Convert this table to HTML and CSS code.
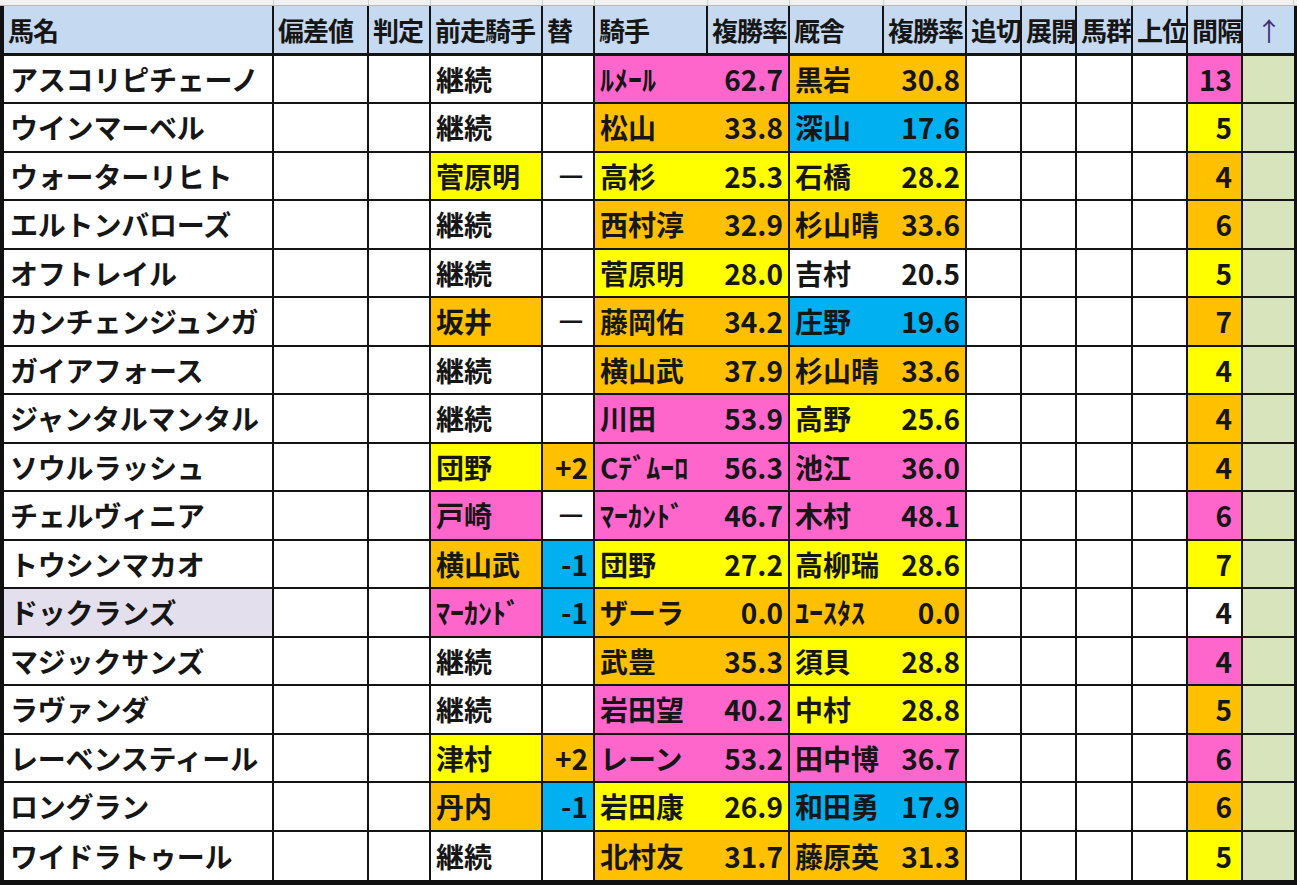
FILE: index.html
```html
<!DOCTYPE html>
<html lang="ja">
<head>
<meta charset="utf-8">
<title>出走馬一覧</title>
<link rel="stylesheet" href="styles.css">
</head>
<body>
<div class="strip">
  <span></span><span></span><span></span><span></span><span></span><span></span><span></span><span></span><span></span><span></span><span></span><span></span><span></span><span></span><span></span>
</div>
<div class="sheet">
  <div class="row head">
    <div class="c">馬名</div>
    <div class="c">偏差値</div>
    <div class="c">判定</div>
    <div class="c">前走騎手</div>
    <div class="c">替</div>
    <div class="c">騎手</div>
    <div class="c">複勝率</div>
    <div class="c">厩舎</div>
    <div class="c">複勝率</div>
    <div class="c">追切</div>
    <div class="c">展開</div>
    <div class="c">馬群</div>
    <div class="c">上位</div>
    <div class="c">間隔</div>
    <div class="c up">↑</div>
  </div>

  <div class="row">
    <div class="c name">アスコリピチェーノ</div><div class="c"></div><div class="c"></div>
    <div class="c">継続</div><div class="c num"></div>
    <div class="c jn pk hw">ﾙﾒｰﾙ</div><div class="c num pk">62.7</div>
    <div class="c jn or">黒岩</div><div class="c num or">30.8</div>
    <div class="c"></div><div class="c"></div><div class="c"></div><div class="c"></div>
    <div class="c int pk">13</div><div class="c gr"></div>
  </div>

  <div class="row">
    <div class="c name">ウインマーベル</div><div class="c"></div><div class="c"></div>
    <div class="c">継続</div><div class="c num"></div>
    <div class="c jn or">松山</div><div class="c num or">33.8</div>
    <div class="c jn bl">深山</div><div class="c num bl">17.6</div>
    <div class="c"></div><div class="c"></div><div class="c"></div><div class="c"></div>
    <div class="c int ye">5</div><div class="c gr"></div>
  </div>

  <div class="row">
    <div class="c name">ウォーターリヒト</div><div class="c"></div><div class="c"></div>
    <div class="c ye">菅原明</div><div class="c num dash">ー</div>
    <div class="c jn ye">高杉</div><div class="c num ye">25.3</div>
    <div class="c jn ye">石橋</div><div class="c num ye">28.2</div>
    <div class="c"></div><div class="c"></div><div class="c"></div><div class="c"></div>
    <div class="c int or">4</div><div class="c gr"></div>
  </div>

  <div class="row">
    <div class="c name">エルトンバローズ</div><div class="c"></div><div class="c"></div>
    <div class="c">継続</div><div class="c num"></div>
    <div class="c jn or">西村淳</div><div class="c num or">32.9</div>
    <div class="c jn or">杉山晴</div><div class="c num or">33.6</div>
    <div class="c"></div><div class="c"></div><div class="c"></div><div class="c"></div>
    <div class="c int or">6</div><div class="c gr"></div>
  </div>

  <div class="row">
    <div class="c name">オフトレイル</div><div class="c"></div><div class="c"></div>
    <div class="c">継続</div><div class="c num"></div>
    <div class="c jn ye">菅原明</div><div class="c num ye">28.0</div>
    <div class="c jn">吉村</div><div class="c num">20.5</div>
    <div class="c"></div><div class="c"></div><div class="c"></div><div class="c"></div>
    <div class="c int ye">5</div><div class="c gr"></div>
  </div>

  <div class="row">
    <div class="c name">カンチェンジュンガ</div><div class="c"></div><div class="c"></div>
    <div class="c or">坂井</div><div class="c num dash">ー</div>
    <div class="c jn or">藤岡佑</div><div class="c num or">34.2</div>
    <div class="c jn bl">庄野</div><div class="c num bl">19.6</div>
    <div class="c"></div><div class="c"></div><div class="c"></div><div class="c"></div>
    <div class="c int or">7</div><div class="c gr"></div>
  </div>

  <div class="row">
    <div class="c name">ガイアフォース</div><div class="c"></div><div class="c"></div>
    <div class="c">継続</div><div class="c num"></div>
    <div class="c jn or">横山武</div><div class="c num or">37.9</div>
    <div class="c jn or">杉山晴</div><div class="c num or">33.6</div>
    <div class="c"></div><div class="c"></div><div class="c"></div><div class="c"></div>
    <div class="c int ye">4</div><div class="c gr"></div>
  </div>

  <div class="row">
    <div class="c name">ジャンタルマンタル</div><div class="c"></div><div class="c"></div>
    <div class="c">継続</div><div class="c num"></div>
    <div class="c jn pk">川田</div><div class="c num pk">53.9</div>
    <div class="c jn ye">高野</div><div class="c num ye">25.6</div>
    <div class="c"></div><div class="c"></div><div class="c"></div><div class="c"></div>
    <div class="c int or">4</div><div class="c gr"></div>
  </div>

  <div class="row">
    <div class="c name">ソウルラッシュ</div><div class="c"></div><div class="c"></div>
    <div class="c ye">団野</div><div class="c num or">+2</div>
    <div class="c jn pk hw">Cﾃﾞﾑｰﾛ</div><div class="c num pk">56.3</div>
    <div class="c jn pk">池江</div><div class="c num pk">36.0</div>
    <div class="c"></div><div class="c"></div><div class="c"></div><div class="c"></div>
    <div class="c int or">4</div><div class="c gr"></div>
  </div>

  <div class="row">
    <div class="c name">チェルヴィニア</div><div class="c"></div><div class="c"></div>
    <div class="c pk">戸崎</div><div class="c num dash">ー</div>
    <div class="c jn pk hw">ﾏｰｶﾝﾄﾞ</div><div class="c num pk">46.7</div>
    <div class="c jn pk">木村</div><div class="c num pk">48.1</div>
    <div class="c"></div><div class="c"></div><div class="c"></div><div class="c"></div>
    <div class="c int pk">6</div><div class="c gr"></div>
  </div>

  <div class="row">
    <div class="c name">トウシンマカオ</div><div class="c"></div><div class="c"></div>
    <div class="c or">横山武</div><div class="c num bl">-1</div>
    <div class="c jn ye">団野</div><div class="c num ye">27.2</div>
    <div class="c jn ye">高柳瑞</div><div class="c num ye">28.6</div>
    <div class="c"></div><div class="c"></div><div class="c"></div><div class="c"></div>
    <div class="c int ye">7</div><div class="c gr"></div>
  </div>

  <div class="row">
    <div class="c name lv">ドックランズ</div><div class="c"></div><div class="c"></div>
    <div class="c pk hw">ﾏｰｶﾝﾄﾞ</div><div class="c num bl">-1</div>
    <div class="c jn or">ザーラ</div><div class="c num or">0.0</div>
    <div class="c jn or hw">ﾕｰｽﾀｽ</div><div class="c num or">0.0</div>
    <div class="c"></div><div class="c"></div><div class="c"></div><div class="c"></div>
    <div class="c int">4</div><div class="c gr"></div>
  </div>

  <div class="row">
    <div class="c name">マジックサンズ</div><div class="c"></div><div class="c"></div>
    <div class="c">継続</div><div class="c num"></div>
    <div class="c jn or">武豊</div><div class="c num or">35.3</div>
    <div class="c jn ye">須貝</div><div class="c num ye">28.8</div>
    <div class="c"></div><div class="c"></div><div class="c"></div><div class="c"></div>
    <div class="c int pk">4</div><div class="c gr"></div>
  </div>

  <div class="row">
    <div class="c name">ラヴァンダ</div><div class="c"></div><div class="c"></div>
    <div class="c">継続</div><div class="c num"></div>
    <div class="c jn pk">岩田望</div><div class="c num pk">40.2</div>
    <div class="c jn ye">中村</div><div class="c num ye">28.8</div>
    <div class="c"></div><div class="c"></div><div class="c"></div><div class="c"></div>
    <div class="c int or">5</div><div class="c gr"></div>
  </div>

  <div class="row">
    <div class="c name">レーベンスティール</div><div class="c"></div><div class="c"></div>
    <div class="c ye">津村</div><div class="c num or">+2</div>
    <div class="c jn pk">レーン</div><div class="c num pk">53.2</div>
    <div class="c jn pk">田中博</div><div class="c num pk">36.7</div>
    <div class="c"></div><div class="c"></div><div class="c"></div><div class="c"></div>
    <div class="c int pk">6</div><div class="c gr"></div>
  </div>

  <div class="row">
    <div class="c name">ロングラン</div><div class="c"></div><div class="c"></div>
    <div class="c or">丹内</div><div class="c num bl">-1</div>
    <div class="c jn ye">岩田康</div><div class="c num ye">26.9</div>
    <div class="c jn bl">和田勇</div><div class="c num bl">17.9</div>
    <div class="c"></div><div class="c"></div><div class="c"></div><div class="c"></div>
    <div class="c int or">6</div><div class="c gr"></div>
  </div>

  <div class="row last">
    <div class="c name">ワイドラトゥール</div><div class="c"></div><div class="c"></div>
    <div class="c">継続</div><div class="c num"></div>
    <div class="c jn or">北村友</div><div class="c num or">31.7</div>
    <div class="c jn or">藤原英</div><div class="c num or">31.3</div>
    <div class="c"></div><div class="c"></div><div class="c"></div><div class="c"></div>
    <div class="c int ye">5</div><div class="c gr"></div>
  </div>
</div>
</body>
</html>
```

FILE: styles.css
```css
:root {
  --cols: 270px 95px 62px 112px 52px 113px 82px 94px 83px 55px 55px 56px 55px 55px 51px;
}

html, body {
  margin: 0;
  background: #ffffff;
}

body {
  font-family: "Noto Sans CJK JP", sans-serif;
  color: #161616;
  overflow: hidden;
}

.strip {
  display: grid;
  grid-template-columns: var(--cols);
  box-sizing: border-box;
  width: 1297px;
  height: 6px;
  padding-left: 4px;
  background: #f1f1f1;
  border-bottom: 1px solid #b9b9b9;
}

.strip span {
  border-right: 1px solid #cfcfcf;
}

.sheet {
  width: 1290px;
  border-left: 4px solid #111;
  border-right: 3px solid #111;
  border-bottom: 6px solid #111;
}

.row {
  display: grid;
  grid-template-columns: var(--cols);
  height: 48.5px;
}

.c {
  box-sizing: border-box;
  display: flex;
  align-items: center;
  padding: 0 5px;
  border-right: 2px solid #141414;
  border-bottom: 2px solid #141414;
  font-size: 28px;
  font-weight: 700;
  white-space: nowrap;
  overflow: hidden;
  background: #fff;
}

.c:last-child {
  border-right: none;
}

.row.last .c {
  border-bottom: none;
}

.head {
  height: 49.5px;
}

.head .c {
  background: #c5d9f1;
  font-size: 26px;
  border-bottom-width: 3px;
  padding: 0 4px;
  letter-spacing: -1px;
}

.head .c.up {
  justify-content: center;
  color: #3d2f70;
  font-weight: 400;
}

.name {
  padding-left: 6px;
  letter-spacing: -0.2px;
}

.jn {
  border-right: none;
  padding-left: 5px;
}

.num {
  justify-content: flex-end;
  padding-right: 5px;
}

.dash {
  padding-right: 8px;
  font-weight: 400;
}

.int {
  justify-content: flex-end;
  padding-right: 9px;
}

.hw {
  letter-spacing: 0;
}

.pk { background: #ff66cc; }
.or { background: #ffc000; }
.ye { background: #ffff00; }
.bl { background: #00b0f0; }
.gr { background: #d8e4bc; }
.lv { background: #e4dfec; }
```
